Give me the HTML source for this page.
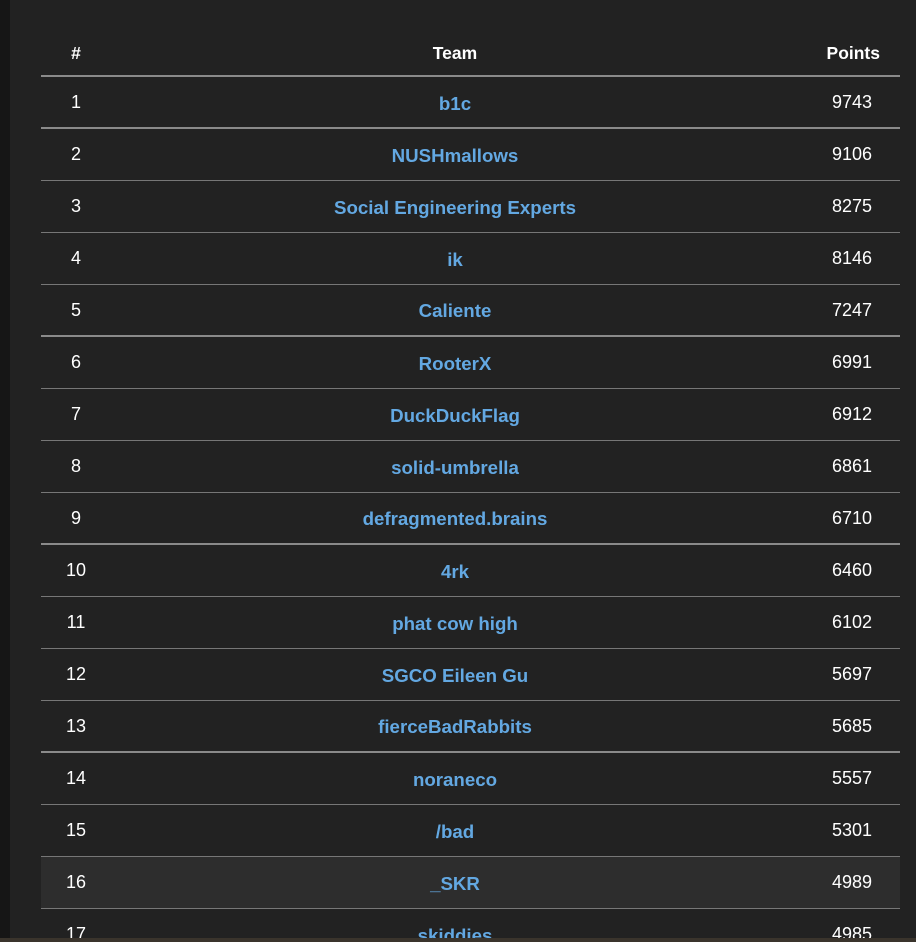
<!DOCTYPE html>
<html><head><style>
html,body{margin:0;padding:0;width:916px;height:942px;overflow:hidden;background:#222;font-family:"Liberation Sans",sans-serif;}
.strip{position:absolute;left:0;top:0;width:10px;height:942px;background:#161616;}
.bottom{position:absolute;left:0;top:938px;width:916px;height:4px;background:#3a342c;}
.wrap{position:absolute;left:0;top:0;width:916px;height:938px;overflow:hidden;}
table{position:absolute;left:41px;top:32px;width:859px;border-collapse:collapse;color:#fff;font-size:18px;table-layout:fixed;}
th{font-weight:bold;font-size:17.5px;height:43px;padding:0;border-bottom:2px solid #8a8a8a;vertical-align:middle;}
td{height:52px;padding:1px 0 0 0;box-sizing:border-box;border-bottom:1px solid #777;vertical-align:middle;}
tr.t td{border-bottom:2px solid #8a8a8a;}
.n{text-align:center;}
.p{text-align:right;padding-right:28px;}
th.p{padding-right:20px;}
td.m{text-align:center;color:#63a8e2;font-weight:bold;font-size:18.7px;padding-top:3px;}
tr.h td{background:#2d2d2d;}
</style></head><body>
<div class="strip"></div>
<div class="wrap">
<table>
<colgroup><col style="width:70px"><col style="width:688px"><col style="width:101px"></colgroup>
<tr><th class="n">#</th><th>Team</th><th class="p">Points</th></tr>
<tr class="t"><td class="n">1</td><td class="m">b1c</td><td class="p">9743</td></tr>
<tr><td class="n">2</td><td class="m">NUSHmallows</td><td class="p">9106</td></tr>
<tr><td class="n">3</td><td class="m">Social Engineering Experts</td><td class="p">8275</td></tr>
<tr><td class="n">4</td><td class="m">ik</td><td class="p">8146</td></tr>
<tr class="t"><td class="n">5</td><td class="m">Caliente</td><td class="p">7247</td></tr>
<tr><td class="n">6</td><td class="m">RooterX</td><td class="p">6991</td></tr>
<tr><td class="n">7</td><td class="m">DuckDuckFlag</td><td class="p">6912</td></tr>
<tr><td class="n">8</td><td class="m">solid-umbrella</td><td class="p">6861</td></tr>
<tr class="t"><td class="n">9</td><td class="m">defragmented.brains</td><td class="p">6710</td></tr>
<tr><td class="n">10</td><td class="m">4rk</td><td class="p">6460</td></tr>
<tr><td class="n">11</td><td class="m">phat cow high</td><td class="p">6102</td></tr>
<tr><td class="n">12</td><td class="m">SGCO Eileen Gu</td><td class="p">5697</td></tr>
<tr class="t"><td class="n">13</td><td class="m">fierceBadRabbits</td><td class="p">5685</td></tr>
<tr><td class="n">14</td><td class="m">noraneco</td><td class="p">5557</td></tr>
<tr><td class="n">15</td><td class="m">/bad</td><td class="p">5301</td></tr>
<tr class="h"><td class="n">16</td><td class="m">_SKR</td><td class="p">4989</td></tr>
<tr><td class="n">17</td><td class="m">skiddies</td><td class="p">4985</td></tr>
</table>
</div>
<div class="bottom"></div>
</body></html>
